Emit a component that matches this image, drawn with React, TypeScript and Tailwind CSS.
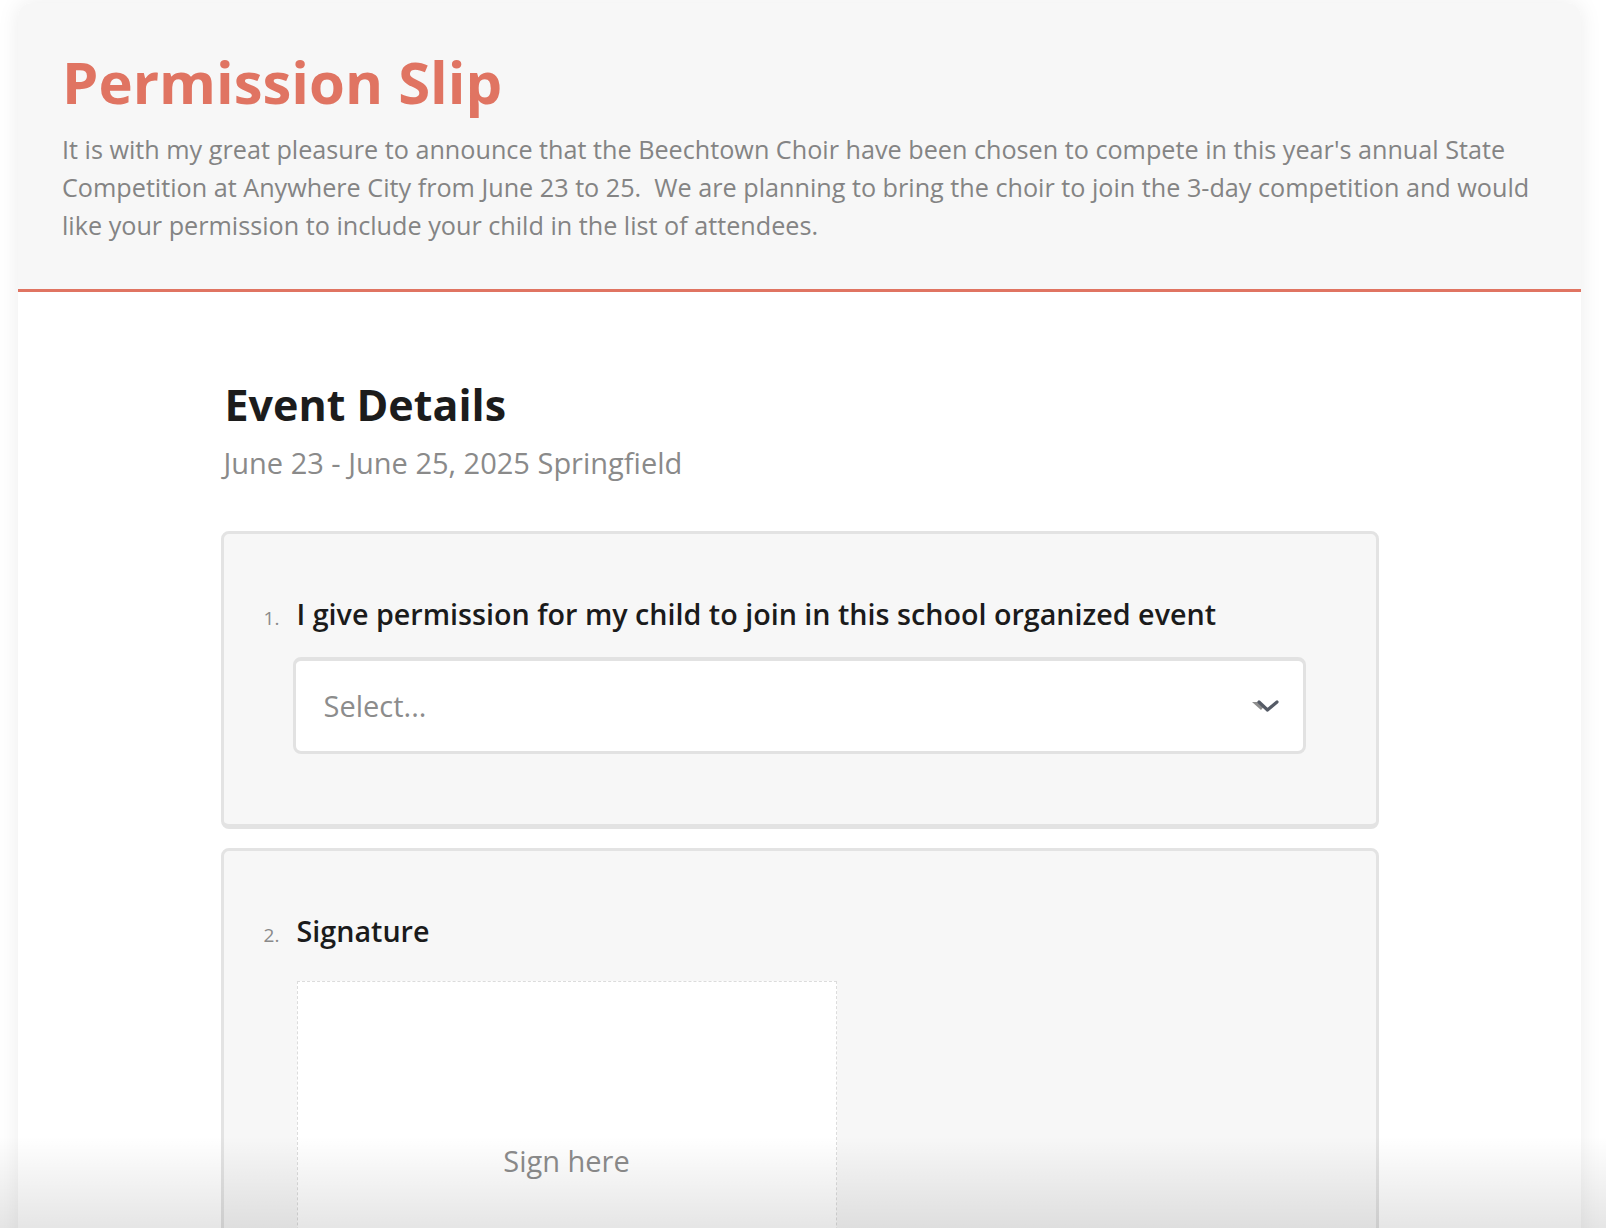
import React from 'react';

function Chevron() {
  return (
    <svg width="30" height="14" viewBox="0 0 30 14" fill="none" aria-hidden="true">
      <path d="M1 3 L8.5 3 L12.5 8 L10 11 Z" fill="#8d8d8d" />
      <polyline
        points="8,3 16.5,11 26,3"
        stroke="#555b66"
        strokeWidth="3.2"
        strokeLinecap="round"
        strokeLinejoin="round"
      />
    </svg>
  );
}

function QuestionCard({
  num,
  label,
  children,
}: {
  num: number;
  label: string;
  children: React.ReactNode;
}) {
  return (
    <div className="rounded-[8px] border-[3px] border-b-[5px] border-[#e3e3e3] bg-[#f7f7f7] pl-[40px] pr-[70px] pt-[62px]">
      <div className="flex items-baseline">
        <span className="w-[33px] text-[19px] text-[#8a8a8a]">{num}.</span>
        <span className="text-[28.7px] leading-[36px] font-semibold text-[#1b1b1b]">{label}</span>
      </div>
      {children}
    </div>
  );
}

export default function App() {
  return (
    <div className="relative h-[1228px] overflow-hidden bg-white font-['Open_Sans','Noto_Sans',sans-serif]">
      <div className="ml-[18px] mt-[3px] w-[1563px] rounded-t-[14px] bg-white shadow-[0_0_22px_rgba(0,0,0,0.08)]">
        {/* Header */}
        <div className="rounded-t-[14px] border-b-[3px] border-[#e07462] bg-[#f7f7f7] px-[44px] pt-[43px] pb-[45px]">
          <h1 className="text-[58px] leading-[72px] font-bold text-[#e07462]">Permission Slip</h1>
          <p className="mt-[12px] text-[25.2px] leading-[38px] text-[#848484]">
            It is with my great pleasure to announce that the Beechtown Choir have been chosen to compete in
            this year's annual State Competition at Anywhere City from June 23 to 25.{'\u00a0'} We are planning
            to bring the choir to join the 3-day competition and would like your permission to include your
            child in the list of attendees.
          </p>
        </div>

        {/* Body */}
        <div className="mx-auto w-[1158px] pt-[86px] pb-[200px]">
          <h2 className="pl-[4px] text-[43px] leading-[53px] font-bold text-[#1c1c1c]">Event Details</h2>
          <p className="mt-[12px] pl-[3px] text-[29px] leading-[39px] text-[#8a8a8a]">
            June 23 - June 25, 2025 Springfield
          </p>

          <div className="mt-[49px] flex flex-col gap-[19px]">
            <QuestionCard num={1} label="I give permission for my child to join in this school organized event">
              <div className="ml-[29px] mt-[24px] mb-[70px] flex h-[97px] items-center justify-between rounded-[8px] border-[3px] border-t-[4px] border-[#e2e2e2] bg-white pl-[28px] pr-[22px]">
                <span className="text-[29px] text-[#8c8c8c]">Select...</span>
                <Chevron />
              </div>
            </QuestionCard>

            <QuestionCard num={2} label="Signature">
              <div className="ml-[33px] mt-[32px] flex h-[330px] w-[540px] justify-center border border-dashed border-[#dcdcdc] bg-white pt-[160px]">
                <span className="text-[29px] leading-[38px] text-[#8c8c8c]">Sign here</span>
              </div>
            </QuestionCard>
          </div>
        </div>
      </div>

      {/* bottom fade */}
      <div className="pointer-events-none absolute inset-x-0 bottom-0 h-[92px] bg-gradient-to-b from-transparent to-black/10" />
    </div>
  );
}
